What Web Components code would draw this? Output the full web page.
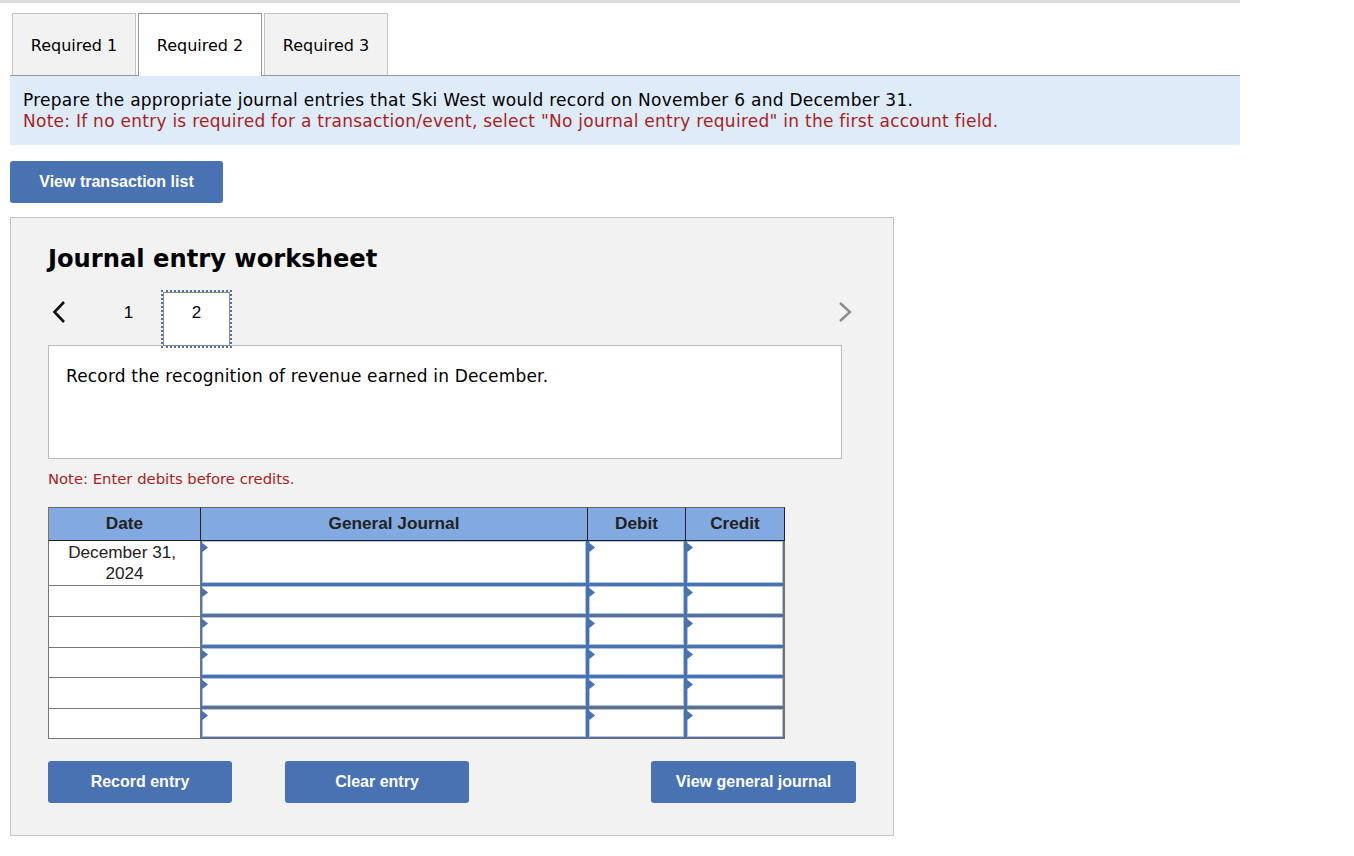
<!DOCTYPE html>
<html lang="en">
<head>
<meta charset="utf-8">
<title>Journal entry worksheet</title>
<style>
  html, body { margin: 0; background: #fff; }
  body { font-family: "DejaVu Sans", Verdana, sans-serif; color: #000; }
  .page { width: 1240px; }
</style>
</head>
<body>
<div class="page">
  <tab-bar>
    <tab-item>Required 1</tab-item>
    <tab-item active>Required 2</tab-item>
    <tab-item>Required 3</tab-item>
  </tab-bar>
  <instruction-box>
    Prepare the appropriate journal entries that Ski West would record on November 6 and December 31.
    <span slot="note">Note: If no entry is required for a transaction/event, select "No journal entry required" in the first account field.</span>
  </instruction-box>
  <action-button id="viewList" style="width:213px;margin:16px 0 14px 10px">View transaction list</action-button>
  <journal-worksheet heading="Journal entry worksheet">
    <entry-stepper></entry-stepper>
    <entry-prompt>Record the recognition of revenue earned in December.</entry-prompt>
    <journal-table date="December 31,"></journal-table>
    <action-button slot="actions" style="width:184px">Record entry</action-button>
    <action-button slot="actions" style="width:184px;margin-left:53px">Clear entry</action-button>
    <action-button slot="actions" style="width:205px;margin-left:auto">View general journal</action-button>
  </journal-worksheet>
</div>

<script>
class TabBar extends HTMLElement {
  constructor() {
    super();
    this.attachShadow({ mode: "open" });
    this.shadowRoot.innerHTML = `
      <style>
        :host {
          display: flex;
          gap: 2px;
          height: 62px;
          padding: 10px 0 0 12px;
          border-top: 3px solid #ddd;
        }
      </style>
      <slot></slot>
    `;
  }
}
customElements.define("tab-bar", TabBar);

class TabItem extends HTMLElement {
  constructor() {
    super();
    this.attachShadow({ mode: "open" });
    this.shadowRoot.innerHTML = `
      <style>
        :host {
          display: flex;
          align-items: center;
          justify-content: center;
          box-sizing: border-box;
          width: 124px;
          height: 62px;
          padding-top: 2px;
          background: #f2f2f2;
          border: 1px solid #c4c4c4;
          border-bottom: 0;
          font-size: 16px;
        }
        :host([active]) {
          background: #fff;
          border-color: #999;
          position: relative;
          z-index: 1;
          height: 63px;
          padding-bottom: 1px;
        }
      </style>
      <slot></slot>
    `;
  }
}
customElements.define("tab-item", TabItem);

class InstructionBox extends HTMLElement {
  constructor() {
    super();
    this.attachShadow({ mode: "open" });
    this.shadowRoot.innerHTML = `
      <style>
        :host {
          display: block;
          box-sizing: border-box;
          height: 70px;
          margin-left: 10px;
          padding: 14px 13px 0;
          background: #deebf8;
          border-top: 1px solid #999;
          font-size: 17px;
          letter-spacing: 0.26px;
          line-height: 21px;
        }
        .note { color: #a91e1e; }
      </style>
      <slot></slot>
      <div class="note"><slot name="note"></slot></div>
    `;
  }
}
customElements.define("instruction-box", InstructionBox);

class ActionButton extends HTMLElement {
  constructor() {
    super();
    this.attachShadow({ mode: "open" });
    this.shadowRoot.innerHTML = `
      <style>
        :host {
          display: flex;
          align-items: center;
          justify-content: center;
          box-sizing: border-box;
          height: 42px;
          background: #4872b2;
          border-radius: 3px;
          color: #fff;
          font: bold 16px "Liberation Sans", Arial, sans-serif;
        }
      </style>
      <slot></slot>
    `;
  }
}
customElements.define("action-button", ActionButton);

class JournalWorksheet extends HTMLElement {
  constructor() {
    super();
    this.attachShadow({ mode: "open" });
    this.shadowRoot.innerHTML = `
      <style>
        :host {
          display: block;
          box-sizing: border-box;
          width: 884px;
          height: 619px;
          margin-left: 10px;
          padding: 24px 37px 0;
          background: #f2f2f2;
          border: 1px solid #c4c4c4;
        }
        h2 {
          margin: 0;
          font-size: 24.2px;
          line-height: 34px;
          font-weight: bold;
        }
        .actions {
          display: flex;
          margin-top: 22px;
        }
      </style>
      <h2 id="heading"></h2>
      <slot></slot>
      <div class="actions"><slot name="actions"></slot></div>
    `;
  }
  connectedCallback() {
    this.shadowRoot.getElementById("heading").textContent = this.getAttribute("heading") || "";
  }
}
customElements.define("journal-worksheet", JournalWorksheet);

class EntryStepper extends HTMLElement {
  constructor() {
    super();
    this.attachShadow({ mode: "open" });
    this.shadowRoot.innerHTML = `
      <style>
        :host {
          display: flex;
          align-items: flex-start;
          width: 804px;
          height: 55px;
          margin-top: 14px;
          position: relative;
          z-index: 1;
        }
        svg { display: block; }
        .prev { margin: 10px 0 0 4px; }
        .next { margin: 10px 0 0 auto; }
        .step {
          box-sizing: border-box;
          height: 54px;
          padding-top: 13px;
          font: 17px/20px "Liberation Sans", Arial, sans-serif;
          text-align: center;
        }
        .first { margin-left: 28px; width: 69px; }
        .current {
          width: 67px;
          margin-top: 2px;
          padding-top: 10px;
          background: #fff;
          border: 1px solid #888;
          outline: 2px dotted #4872b2;
        }
      </style>
      <svg class="prev" width="14" height="24" viewBox="0 0 14 24">
        <path d="M12 2 L2.5 12 L12 22" fill="none" stroke="#111" stroke-width="2.6"/>
      </svg>
      <div class="step first">1</div>
      <div class="step current">2</div>
      <svg class="next" width="14" height="24" viewBox="0 0 14 24">
        <path d="M2 3 L12 12 L2 21" fill="none" stroke="#8c8c8c" stroke-width="2.4"/>
      </svg>
    `;
  }
}
customElements.define("entry-stepper", EntryStepper);

class EntryPrompt extends HTMLElement {
  constructor() {
    super();
    this.attachShadow({ mode: "open" });
    this.shadowRoot.innerHTML = `
      <style>
        :host {
          display: block;
          box-sizing: border-box;
          width: 794px;
          height: 114px;
          padding: 20px 17px 0;
          background: #fff;
          border: 1px solid #bbb;
          font-size: 17px;
          letter-spacing: 0.17px;
          line-height: 21px;
        }
      </style>
      <slot></slot>
    `;
  }
}
customElements.define("entry-prompt", EntryPrompt);

class JournalTable extends HTMLElement {
  constructor() {
    super();
    this.attachShadow({ mode: "open" });
    const heights = [45, 31, 31, 30, 31, 30];
    // the line under each row is not the same colour all the way down
    const bands = ["#4872b2", "#5a6f96", "#4b72ac", "#4872b2", "#666f80", "#5a6f96"];
    const field = (i, cls) => `<div class="field ${cls}" style="height:${heights[i]}px;--band:${bands[i]}"><div class="box"></div></div>`;
    const rows = heights.map((h, i) => {
      const last = i === heights.length - 1 ? "bottom" : "";
      return `
        <div class="date" style="height:${h}px">${i === 0 ? this.getAttribute("date") + "&nbsp;<br>2024" : ""}</div>
        ${field(i, last + " account")}
        ${field(i, last)}
        ${field(i, last + " end")}
      `;
    }).join("");
    this.shadowRoot.innerHTML = `
      <style>
        :host {
          display: block;
          margin-top: 10px;
          font-family: "Liberation Sans", Arial, sans-serif;
          color: #222;
        }
        .note {
          color: #a91e1e;
          font: 14.8px/20px "DejaVu Sans", Verdana, sans-serif;
          margin-bottom: 18px;
        }
        .grid {
          display: grid;
          grid-template-columns: 152px 387px 98px 100px;
          width: 737px;
        }
        .head {
          box-sizing: border-box;
          height: 34px;
          background: #82aae0;
          border-top: 1px solid #666;
          border-bottom: 1px solid #222;
          border-left: 1px solid #222;
          font-weight: bold;
          font-size: 17.2px;
          line-height: 30px;
          text-align: center;
        }
        .head:first-child { border-left-color: #777; }
        .head:nth-child(4) { border-right: 1px solid #222; }
        .date {
          box-sizing: border-box;
          background: #fff;
          border-left: 1px solid #777;
          border-bottom: 1px solid #777;
          padding-top: 1px;
          font-size: 17.2px;
          line-height: 21px;
          text-align: center;
        }
        .field {
          box-sizing: border-box;
          position: relative;
          margin-left: -1px;
          padding: 0 0 3px 3px;
          background: linear-gradient(#4872b2, #4872b2) 0 0 / 3px 100% no-repeat, var(--band);
        }
        .box {
          box-sizing: border-box;
          height: 100%;
          margin-right: 1px;
          background: #fff;
          border: 1px solid #a9c3ea;
        }
        .field::before {
          content: "";
          position: absolute;
          left: 2px;
          top: 2px;
          width: 7px;
          height: 9px;
          background: #4872b2;
          clip-path: polygon(0 0, 35% 8%, 100% 50%, 35% 92%, 0 100%);
        }
        .account {
          margin-left: 0;
          padding-left: 1px;
          border-left: 1px solid #777;
        }
        .account::before { left: 0; }
        .end { border-right: 2px solid #6f6f6f; }
        .end .box { margin-right: 0; }
        .bottom { border-bottom: 1px solid #6f6f6f; padding-bottom: 1px; }
      </style>
      <div class="note">Note: Enter debits before credits.</div>
      <div class="grid">
        <div class="head">Date</div>
        <div class="head">General Journal</div>
        <div class="head">Debit</div>
        <div class="head">Credit</div>
        ${rows}
      </div>
    `;
  }
}
customElements.define("journal-table", JournalTable);
</script>
</body>
</html>
